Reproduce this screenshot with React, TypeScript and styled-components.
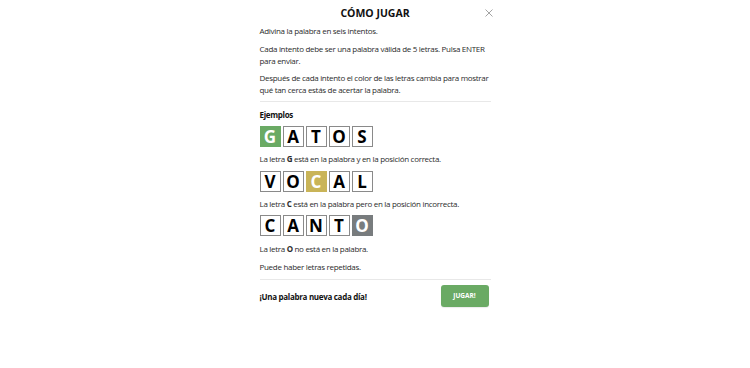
import React from "react";
import styled, { createGlobalStyle } from "styled-components";

const Global = createGlobalStyle`
  html, body { margin: 0; padding: 0; background: #ffffff; }
  body { font-family: "Open Sans", "Noto Sans", sans-serif; color: #2b2b2b; }
  * { box-sizing: border-box; }
`;

const Page = styled.div`
  width: 750px;
  height: 368px;
  display: flex;
  justify-content: center;
  background: #ffffff;
`;

const Modal = styled.div`
  width: 231px;
  padding-top: 5px;
  display: flex;
  flex-direction: column;
`;

const Header = styled.div`
  position: relative;
  height: 16px;
  display: flex;
  align-items: center;
  justify-content: center;
`;

const Title = styled.h1`
  margin: 0;
  font-size: 10.5px;
  line-height: 16px;
  font-weight: 700;
  color: #111;
`;

const Close = styled.button`
  position: absolute;
  right: -3px;
  top: 3px;
  width: 10px;
  height: 10px;
  padding: 0;
  border: none;
  background: none;
  display: flex;
  align-items: center;
  justify-content: center;
`;

const Text = styled.p<{ $mt?: number }>`
  margin: ${(p) => p.$mt ?? 0}px 0 0 0;
  font-size: 8px;
  letter-spacing: -0.3px;
  line-height: 12px;
  color: #2b2b2b;
`;

const Rule = styled.hr<{ $mt: number }>`
  margin: ${(p) => p.$mt}px 0 0 0;
  border: none;
  border-top: 1px solid #e8e8e8;
  height: 0;
`;

const Heading = styled.h2`
  margin: 7px 0 0 0;
  font-size: 8px;
  letter-spacing: -0.3px;
  line-height: 12px;
  font-weight: 700;
  color: #111;
`;

const Row = styled.div<{ $mt: number }>`
  display: flex;
  gap: 2px;
  margin-top: ${(p) => p.$mt}px;
`;

type TileState = "correct" | "present" | "absent" | "empty";

const tileBg: Record<TileState, string> = {
  correct: "#6aaa64",
  present: "#c9b458",
  absent: "#787c7e",
  empty: "#ffffff",
};

const Tile = styled.div<{ $state: TileState }>`
  width: 21px;
  height: 21px;
  display: flex;
  align-items: center;
  justify-content: center;
  font-size: 17px;
  font-weight: 700;
  line-height: 1;
  background: ${(p) => tileBg[p.$state]};
  color: ${(p) => (p.$state === "empty" ? "#000" : "#fff")};
  border: 1px solid ${(p) => (p.$state === "empty" ? "#8a8a8a" : tileBg[p.$state])};
`;

const Footer = styled.div`
  margin-top: 5px;
  display: flex;
  align-items: center;
  justify-content: space-between;
`;

const FooterText = styled.span`
  font-size: 8px;
  letter-spacing: -0.3px;
  font-weight: 700;
  color: #111;
  margin-top: 2px;
`;

const PlayButton = styled.button`
  width: 48px;
  height: 22px;
  margin-right: 2px;
  border: none;
  border-radius: 3px;
  background: #6aaa64;
  color: #fff;
  font-family: "Open Sans", sans-serif;
  font-size: 6.5px;
  font-weight: 700;
  padding: 0;
  box-shadow: 0 1px 1px rgba(0,0,0,0.08);
`;

const examples: { word: string; idx: number; state: TileState }[] = [
  { word: "GATOS", idx: 0, state: "correct" },
  { word: "VOCAL", idx: 2, state: "present" },
  { word: "CANTO", idx: 4, state: "absent" },
];

function Word({ word, idx, state, mt }: { word: string; idx: number; state: TileState; mt: number }) {
  return (
    <Row $mt={mt}>
      {word.split("").map((l, i) => (
        <Tile key={i} $state={i === idx ? state : "empty"}>
          {l}
        </Tile>
      ))}
    </Row>
  );
}

export default function App() {
  return (
    <>
      <Global />
      <Page>
        <Modal>
          <Header>
            <Title>CÓMO JUGAR</Title>
            <Close aria-label="Cerrar">
              <svg width="8" height="8" viewBox="0 0 8 8">
                <path d="M0.5 0.5 L7.5 7.5 M7.5 0.5 L0.5 7.5" stroke="#9a9a9a" strokeWidth="0.9" />
              </svg>
            </Close>
          </Header>
          <Text $mt={4}>Adivina la palabra en seis intentos.</Text>
          <Text $mt={5.5}>
            Cada intento debe ser una palabra válida de 5 letras. Pulsa ENTER para enviar.
          </Text>
          <Text $mt={5.5}>
            Después de cada intento el color de las letras cambia para mostrar qué tan cerca estás de acertar la palabra.
          </Text>
          <Rule $mt={5} />
          <Heading>Ejemplos</Heading>
          <Word {...examples[0]} mt={5} />
          <Text $mt={6}>
            La letra <b>G</b> está en la palabra y en la posición correcta.
          </Text>
          <Word {...examples[1]} mt={6} />
          <Text $mt={6}>
            La letra <b>C</b> está en la palabra pero en la posición incorrecta.
          </Text>
          <Word {...examples[2]} mt={5} />
          <Text $mt={6.5}>
            La letra <b>O</b> no está en la palabra.
          </Text>
          <Text $mt={6}>Puede haber letras repetidas.</Text>
          <Rule $mt={6} />
          <Footer>
            <FooterText>¡Una palabra nueva cada día!</FooterText>
            <PlayButton>JUGAR!</PlayButton>
          </Footer>
        </Modal>
      </Page>
    </>
  );
}
